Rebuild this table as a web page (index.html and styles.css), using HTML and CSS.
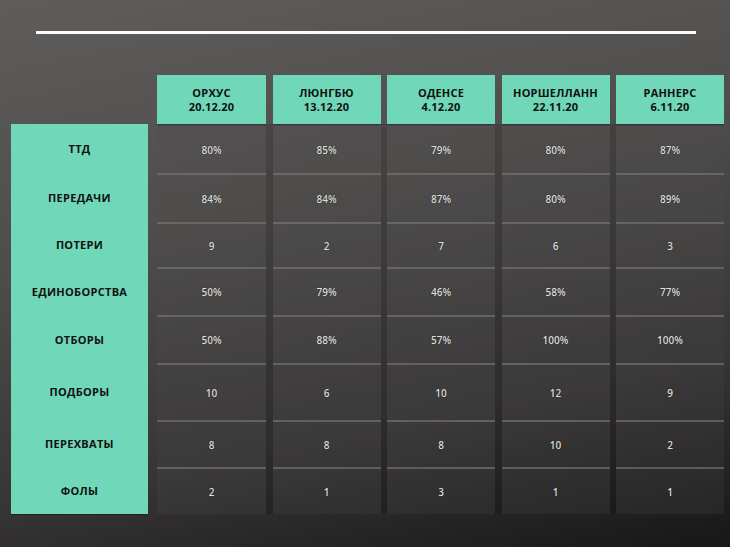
FILE: index.html
```html
<!DOCTYPE html>
<html lang="ru">
<head>
<meta charset="utf-8">
<title>Статистика</title>
<link rel="stylesheet" href="styles.css">
</head>
<body>
<div class="page">
  <div class="rule"></div>
  <div class="table">
    <div class="corner"></div>
    <div class="heads">
      <div class="head">ОРХУС<br>20.12.20</div>
      <div class="head">ЛЮНГБЮ<br>13.12.20</div>
      <div class="head">ОДЕНСЕ<br>4.12.20</div>
      <div class="head">НОРШЕЛЛАНН<br>22.11.20</div>
      <div class="head">РАННЕРС<br>6.11.20</div>
    </div>

    <div class="labels">
      <div class="label">ТТД</div>
      <div class="label">ПЕРЕДАЧИ</div>
      <div class="label">ПОТЕРИ</div>
      <div class="label">ЕДИНОБОРСТВА</div>
      <div class="label">ОТБОРЫ</div>
      <div class="label">ПОДБОРЫ</div>
      <div class="label">ПЕРЕХВАТЫ</div>
      <div class="label">ФОЛЫ</div>
    </div>

    <div class="data">
      <div class="cell first">80%</div><div class="cell first">85%</div><div class="cell first">79%</div><div class="cell first">80%</div><div class="cell first">87%</div>
      <div class="cell">84%</div><div class="cell">84%</div><div class="cell">87%</div><div class="cell">80%</div><div class="cell">89%</div>
      <div class="cell">9</div><div class="cell">2</div><div class="cell">7</div><div class="cell">6</div><div class="cell">3</div>
      <div class="cell">50%</div><div class="cell">79%</div><div class="cell">46%</div><div class="cell">58%</div><div class="cell">77%</div>
      <div class="cell">50%</div><div class="cell">88%</div><div class="cell">57%</div><div class="cell">100%</div><div class="cell">100%</div>
      <div class="cell">10</div><div class="cell">6</div><div class="cell">10</div><div class="cell">12</div><div class="cell">9</div>
      <div class="cell">8</div><div class="cell">8</div><div class="cell">8</div><div class="cell">10</div><div class="cell">2</div>
      <div class="cell">2</div><div class="cell">1</div><div class="cell">3</div><div class="cell">1</div><div class="cell">1</div>
    </div>
  </div>
</div>
</body>
</html>
```
FILE: styles.css
```css
html, body {
  margin: 0;
  padding: 0;
}
body {
  font-family: "Open Sans", "Liberation Sans", sans-serif;
}
.page {
  width: 730px;
  height: 547px;
  overflow: hidden;
  background: linear-gradient(168deg, #5f5c5c 0%, #4f4c4c 38%, #373535 72%, #181717 100%);
  display: flex;
  flex-direction: column;
}
.rule {
  flex-shrink: 0;
  margin: 31px 0 0 36px;
  width: 660px;
  height: 3px;
  background: #fbfbfb;
}
.table {
  flex-shrink: 0;
  margin: 41px 0 0 11px;
  display: grid;
  grid-template-columns: 137px 567px;
  grid-template-rows: 49px 390px;
  column-gap: 9px;
}
.corner {
  grid-column: 1;
  grid-row: 1;
}
.heads,
.data {
  display: grid;
  grid-template-columns: 109px 108px 108px 108px 108px;
  column-gap: 6.5px;
}
.heads {
  grid-column: 2;
  grid-row: 1;
}
.head {
  background: #70d8b8;
  color: #111;
  font-weight: 700;
  font-size: 11px;
  line-height: 14.5px;
  letter-spacing: 0.2px;
  text-align: center;
  display: flex;
  align-items: center;
  justify-content: center;
  padding-top: 1px;
  box-shadow: 0 1px 0 rgba(0,0,0,0.25);
}
.labels {
  grid-column: 1;
  grid-row: 2;
  background: #70d8b8;
  display: grid;
  grid-template-rows: 49px 49px 45px 48px 48px 57px 47px 47px;
  box-shadow: 0 1px 0 rgba(0,0,0,0.3);
}
.label {
  display: flex;
  align-items: center;
  justify-content: center;
  color: #111;
  font-weight: 700;
  font-size: 11px;
  letter-spacing: 0.3px;
}
.data {
  grid-column: 2;
  grid-row: 2;
  grid-template-rows: 49px 49px 45px 48px 48px 57px 47px 47px;
  background: rgba(0,0,0,0.16);
}
.cell {
  display: flex;
  align-items: center;
  justify-content: center;
  font-size: 10px;
  font-weight: 600;
  color: #dedede;
  text-shadow: 0 0 1px rgba(0,0,0,0.8);
  background: rgba(255,255,255,0.065);
  border-top: 2px solid rgba(125,122,122,0.6);
  box-sizing: border-box;
}
.cell.first {
  border-top: 2px solid rgba(0,0,0,0.12);
}
```
